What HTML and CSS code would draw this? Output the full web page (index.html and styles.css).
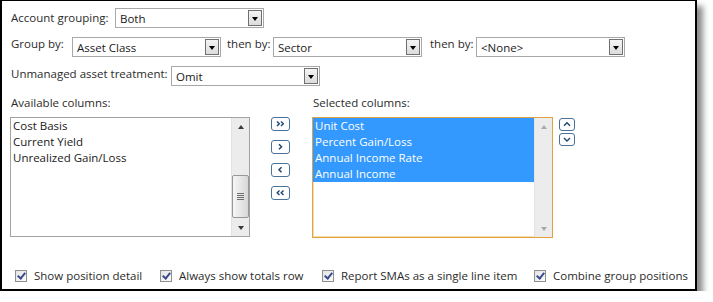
FILE: index.html
```html
<!DOCTYPE html>
<html lang="en">
<head>
    <meta charset="UTF-8">
    <meta name="viewport" content="width=device-width, initial-scale=1.0">
    <title>Column options</title>
    <link rel="stylesheet" href="styles.css">
</head>
<body>
    <div class="panel">
        <!-- grouping options -->
        <div class="row row-first">
            <span class="label w-account">Account grouping:</span>
            <div class="combo"><span class="combo-text">Both</span><span class="drop"><i></i></span></div>
        </div>
        <div class="row">
            <span class="label w-group up2">Group by:</span>
            <div class="combo"><span class="combo-text">Asset Class</span><span class="drop"><i></i></span></div>
            <span class="label then then-1 up2">then by:</span>
            <div class="combo"><span class="combo-text">Sector</span><span class="drop"><i></i></span></div>
            <span class="label then then-2 up2">then by:</span>
            <div class="combo"><span class="combo-text">&lt;None&gt;</span><span class="drop"><i></i></span></div>
        </div>
        <div class="row">
            <span class="label w-unmanaged up1">Unmanaged asset treatment:</span>
            <div class="combo"><span class="combo-text">Omit</span><span class="drop"><i></i></span></div>
        </div>

        <!-- column pickers -->
        <div class="pickers">
            <div class="picker">
                <div class="picker-title">Available columns:</div>
                <div class="listbox">
                    <ul class="items">
                        <li>Cost Basis</li>
                        <li>Current Yield</li>
                        <li>Unrealized Gain/Loss</li>
                    </ul>
                    <div class="scrollbar">
                        <span class="arrow arrow-up"></span>
                        <div class="track">
                            <div class="thumb"><span class="grip"></span></div>
                        </div>
                        <span class="arrow arrow-down"></span>
                    </div>
                </div>
            </div>

            <div class="movers">
                <button class="mover" title="Add all">
                    <svg width="19" height="14" viewBox="0 0 19 14"><rect x="0.5" y="0.5" width="18" height="13" rx="2.5" fill="#fff" stroke="#4b7298"/><path d="M6 4.5 L8.3 6.8 L6 9.1 M10 4.5 L12.3 6.8 L10 9.1" fill="none" stroke="#1f4570" stroke-width="1.4"/></svg>
                </button>
                <button class="mover" title="Add">
                    <svg width="19" height="14" viewBox="0 0 19 14"><rect x="0.5" y="0.5" width="18" height="13" rx="2.5" fill="#fff" stroke="#4b7298"/><path d="M8 4.3 L10.5 6.8 L8 9.3" fill="none" stroke="#1f4570" stroke-width="1.5"/></svg>
                </button>
                <button class="mover" title="Remove">
                    <svg width="19" height="14" viewBox="0 0 19 14"><rect x="0.5" y="0.5" width="18" height="13" rx="2.5" fill="#fff" stroke="#4b7298"/><path d="M10.5 4.3 L8 6.8 L10.5 9.3" fill="none" stroke="#1f4570" stroke-width="1.5"/></svg>
                </button>
                <button class="mover" title="Remove all">
                    <svg width="19" height="14" viewBox="0 0 19 14"><rect x="0.5" y="0.5" width="18" height="13" rx="2.5" fill="#fff" stroke="#4b7298"/><path d="M8.5 4.5 L6.2 6.8 L8.5 9.1 M12.5 4.5 L10.2 6.8 L12.5 9.1" fill="none" stroke="#1f4570" stroke-width="1.4"/></svg>
                </button>
            </div>

            <div class="picker">
                <div class="picker-title">Selected columns:</div>
                <div class="listbox listbox-focus">
                    <ul class="items">
                        <li class="selected">Unit Cost</li>
                        <li class="selected">Percent Gain/Loss</li>
                        <li class="selected">Annual Income Rate</li>
                        <li class="selected">Annual Income</li>
                    </ul>
                    <div class="scrollbar scrollbar-off">
                        <span class="arrow arrow-up"></span>
                        <div class="track"></div>
                        <span class="arrow arrow-down"></span>
                    </div>
                </div>
            </div>

            <div class="order">
                <button class="mover" title="Move up">
                    <svg width="16" height="13" viewBox="0 0 16 13"><rect x="0.5" y="0.5" width="15" height="12" rx="2.5" fill="#fff" stroke="#4b7298"/><path d="M5 7.8 L8 4.8 L11 7.8" fill="none" stroke="#1f4570" stroke-width="1.4"/></svg>
                </button>
                <button class="mover" title="Move down">
                    <svg width="16" height="13" viewBox="0 0 16 13"><rect x="0.5" y="0.5" width="15" height="12" rx="2.5" fill="#fff" stroke="#4b7298"/><path d="M5 5 L8 8 L11 5" fill="none" stroke="#1f4570" stroke-width="1.4"/></svg>
                </button>
            </div>
        </div>

        <!-- display flags -->
        <div class="flags">
            <label class="flag"><span class="check"></span>Show position detail</label>
            <label class="flag"><span class="check"></span>Always show totals row</label>
            <label class="flag"><span class="check"></span>Report SMAs as a single line item</label>
            <label class="flag"><span class="check"></span>Combine group positions</label>
        </div>
    </div>
</body>
</html>
```

FILE: styles.css
```css
/* page */
body {
    margin: 0;
    background-color: #fff;
    font-family: "Open Sans", "Noto Sans", sans-serif;
    font-size: 11.5px;
    color: #2b2b2b;
}

/* framed panel with drop shadow */
.panel {
    box-sizing: border-box;
    width: 697px;
    height: 291px;
    border: 2px solid #000;
    border-top-width: 1px;
    padding: 7px 0 0 8px;
    background-color: #fff;
    box-shadow: 6px 6px 6px rgba(0, 0, 0, 0.45);
}

/* option rows */
.row {
    display: flex;
    align-items: flex-start;
    height: 20px;
    margin-top: 9px;
}

.row-first {
    margin-top: 0;
    align-items: center;
}

.label {
    box-sizing: border-box;
    padding-left: 1px;
    line-height: 16px;
    white-space: nowrap;
}

.up2 { margin-top: -1px; }
.up1 { margin-top: 0; }
.row-first .label { margin-top: 0; }

.w-account { width: 105px; }
.w-group { width: 62px; }
.w-unmanaged { width: 161px; }

.then { width: 46px; padding-left: 0; }
.then-1 { margin-left: 6px; }
.then-2 { margin-left: 8px; }

/* drop-down */
.combo {
    box-sizing: border-box;
    display: flex;
    align-items: center;
    width: 149px;
    height: 20px;
    border: 1px solid #a8a8a8;
    background-color: #fff;
}

.combo-text {
    flex: 1;
    padding-left: 4px;
    padding-top: 1px;
    color: #1a1a1a;
}

.drop {
    box-sizing: border-box;
    display: flex;
    align-items: center;
    justify-content: center;
    width: 14px;
    height: 16px;
    margin-right: 1px;
    border: 1px solid #707070;
    background: linear-gradient(#f4f4f4, #dcdcdc);
}

.drop i {
    width: 0;
    height: 0;
    border-left: 3.5px solid transparent;
    border-right: 3.5px solid transparent;
    border-top: 4px solid #000;
    margin-top: 2px;
}

/* list pickers */
.pickers {
    display: flex;
    align-items: flex-start;
    margin-top: 9px;
}

.picker-title {
    padding-left: 1px;
    line-height: 16px;
    margin-bottom: 6px;
}

.listbox {
    box-sizing: border-box;
    display: flex;
    width: 240px;
    height: 120px;
    border: 1px solid #a3a3a3;
    background-color: #fff;
}

.listbox-focus {
    width: 241px;
    height: 121px;
    border-color: #e2a33f;
    box-shadow: inset 0 0 0 1px #f6dcae;
}

.items {
    flex: 1;
    list-style: none;
    margin: 0;
    padding: 0;
}

.items li {
    height: 16px;
    line-height: 16px;
    padding-left: 2px;
    color: #1a1a1a;
}

.items li.selected {
    background-color: #3399ff;
    color: #fff;
}

/* scroll bar */
.scrollbar {
    display: flex;
    flex-direction: column;
    width: 17px;
    background-color: #ececec;
    border-left: 1px solid #e2e2e2;
}

.arrow {
    display: flex;
    height: 17px;
    align-items: center;
    justify-content: center;
}

.arrow::before {
    content: "";
    width: 0;
    height: 0;
    border-left: 3.5px solid transparent;
    border-right: 3.5px solid transparent;
}

.arrow-up::before { border-bottom: 4px solid #3a3a3a; }
.arrow-down::before { border-top: 4px solid #3a3a3a; }

.scrollbar-off .arrow-up::before { border-bottom-color: #a9a9a9; }
.scrollbar-off .arrow-down::before { border-top-color: #a9a9a9; }

.track {
    flex: 1;
    display: flex;
    flex-direction: column;
    justify-content: flex-end;
    padding: 0 0 1px 0;
}

.thumb {
    box-sizing: border-box;
    display: flex;
    align-items: center;
    justify-content: center;
    height: 43px;
    border: 1px solid #979797;
    border-radius: 2px;
    background: linear-gradient(90deg, #f6f6f6, #e4e4e4 60%, #d6d6d6);
}

.grip {
    width: 7px;
    height: 7px;
    background: repeating-linear-gradient(#6e6e6e 0 1px, transparent 1px 2px);
}

/* move buttons */
.movers {
    display: flex;
    flex-direction: column;
    gap: 9px;
    margin: 22px 22px 0 21px;
}

.order {
    display: flex;
    flex-direction: column;
    gap: 2px;
    margin: 23px 0 0 6px;
}

.mover {
    display: block;
    padding: 0;
    border: none;
    background: none;
    line-height: 0;
    cursor: pointer;
}

/* check boxes */
.flags {
    display: grid;
    grid-template-columns: 145px 162px 212px auto;
    align-items: center;
    margin: 30px 0 0 5px;
}

.flag {
    display: flex;
    align-items: center;
    gap: 7px;
    line-height: 16px;
    white-space: nowrap;
}

.check {
    box-sizing: border-box;
    position: relative;
    width: 12px;
    height: 12px;
    border: 1px solid #8e8f8f;
    background: linear-gradient(135deg, #e4e4e4, #fbfbfb);
}

.check::after {
    content: "";
    position: absolute;
    left: 3px;
    top: 0;
    width: 3px;
    height: 6px;
    border-right: 2px solid #3a4a8c;
    border-bottom: 2px solid #3a4a8c;
    transform: rotate(40deg);
}
```
